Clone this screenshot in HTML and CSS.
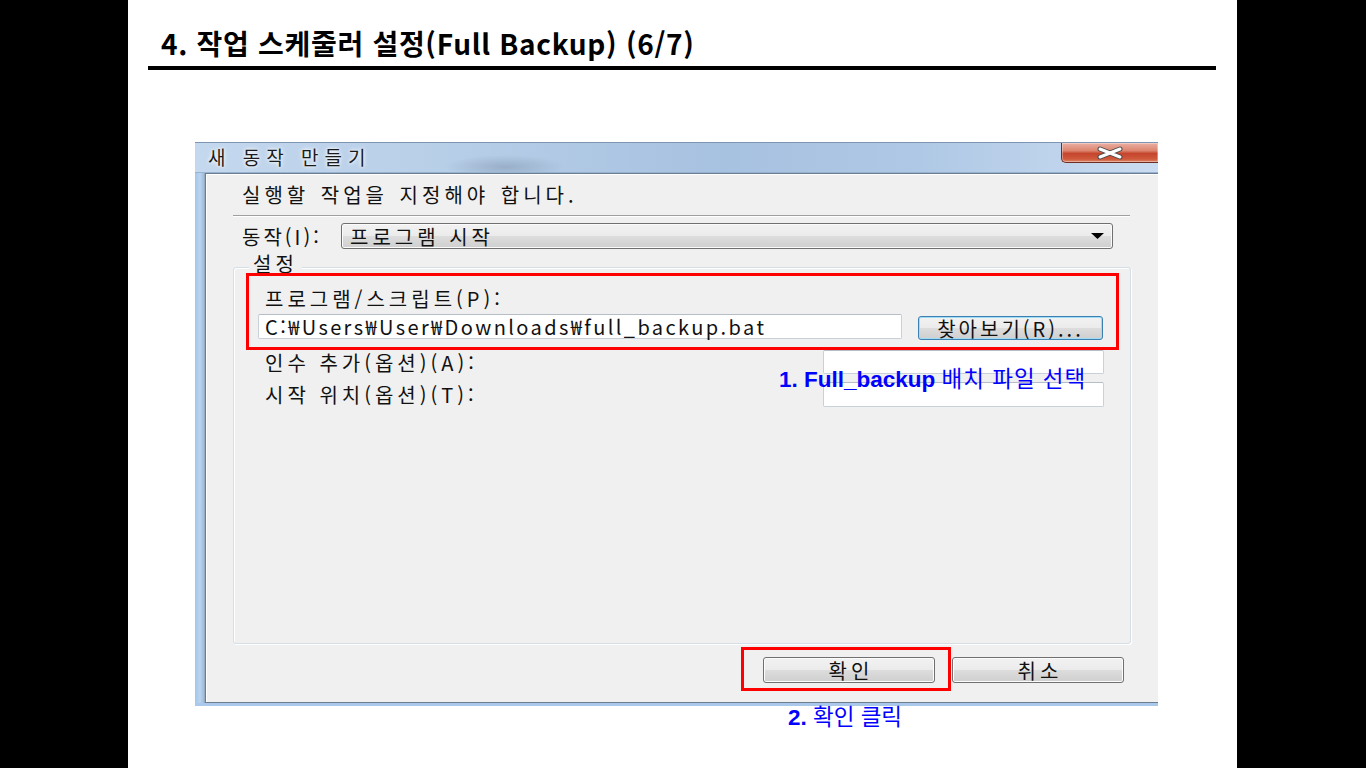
FILE: index.html
```html
<!DOCTYPE html>
<html lang="ko">
<head>
<meta charset="utf-8">
<title>4. 작업 스케줄러 설정(Full Backup) (6/7)</title>
<link rel="stylesheet" href="styles.css">
</head>
<body>
<div class="slide">
  <h1 class="slide-title">4. 작업 스케줄러 설정(Full Backup) (6/7)</h1>
  <div class="rule"></div>
  <div class="shot">
    <div class="dialog">
      <div class="titlebar">
        <span class="win-title">새 동작 만들기</span>
        <div class="close-btn">
          <svg width="28" height="14" viewBox="0 0 28 14">
            <path d="M4 3 L24 11 M24 3 L4 11" stroke="#4a4a4a" stroke-width="5" stroke-linecap="round" fill="none"/>
            <path d="M4 3 L24 11 M24 3 L4 11" stroke="#ffffff" stroke-width="3" stroke-linecap="round" fill="none"/>
          </svg>
        </div>
      </div>
      <div class="win-body">
        <div class="frame-left"></div>
        <div class="client">
          <div class="hdr">실행할 작업을 지정해야 합니다.</div>
          <div class="sep"></div>
          <div class="action-row">
            <span class="action-lbl">동작(I):</span>
            <div class="combo">
              <span>프로그램 시작</span>
              <svg class="combo-arrow" width="13" height="6" viewBox="0 0 13 6"><path d="M0 0 H13 L6.5 6 Z" fill="#000"/></svg>
            </div>
          </div>
          <div class="group">
            <span class="legend">설정</span>
            <div class="g-label">프로그램/스크립트(P):</div>
            <div class="prog-row">
              <div class="textbox tb-path">C:₩Users₩User₩Downloads₩full_backup.bat</div>
              <div class="btn btn-focus browse">찾아보기(R)...</div>
            </div>
            <div class="opt-row">
              <span class="g-lbl">인수 추가(옵션)(A):</span>
              <div class="textbox tb-opt"></div>
            </div>
            <div class="opt-row opt-row2">
              <span class="g-lbl">시작 위치(옵션)(T):</span>
              <div class="textbox tb-opt"></div>
            </div>
          </div>
          <div class="btn-row">
            <div class="btn ok">확인</div>
            <div class="btn cancel">취소</div>
          </div>
        </div>
      </div>
    </div>
    <div class="mark mark-prog"></div>
    <div class="mark mark-ok"></div>
    <div class="note note1"><b>1. Full_backup</b> <span class="note-ko">배치 파일 선택</span></div>
    <div class="note note2"><b>2.</b> 확인 클릭</div>
  </div>
</div>
</body>
</html>
```

FILE: styles.css
```css
html, body {
  margin: 0;
  height: 100%;
}
body {
  background: #000;
  overflow: hidden;
}
.slide {
  width: 1109px;
  height: 768px;
  margin-left: 128px;
  background: #fff;
  display: flex;
  flex-direction: column;
  font-family: "Noto Sans CJK KR", "Noto Sans", sans-serif;
}
.slide-title {
  margin: 25px 0 0 33px;
  font-size: 28px;
  font-weight: 700;
  letter-spacing: 0.7px;
  line-height: 36px;
  color: #000;
  white-space: nowrap;
}
.rule {
  margin: 5px 0 0 20px;
  width: 1068px;
  height: 4px;
  background: #000;
}
.shot {
  position: relative;
  margin: 72px 0 0 67px;
  width: 963px;
  height: 564px;
}
.dialog {
  width: 963px;
  height: 564px;
  display: flex;
  flex-direction: column;
  overflow: hidden;
  background: #f0f0f0;
  font-size: 20px;
  letter-spacing: 4px;
  color: #111;
}
.titlebar {
  height: 31px;
  box-sizing: border-box;
  display: flex;
  align-items: flex-start;
  border-top: 1px solid #7d95b0;
  border-bottom: 1px solid #98b3d2;
  background:
    radial-gradient(ellipse 60px 12px at 310px 24px, rgba(120,140,165,0.45), rgba(120,140,165,0) 100%),
    linear-gradient(90deg, #c4d8ee 0%, #b8cfe8 25%, #a7c1e0 55%, #afc8e5 75%, #cadcf1 100%);
}
.win-title {
  margin-left: 13px;
  line-height: 28px;
  font-size: 19px;
  letter-spacing: 6px;
  color: #1b1b1b;
  text-shadow: 0 0 5px #fff, 0 0 3px #fff;
  white-space: nowrap;
}
.close-btn {
  margin-left: auto;
  width: 97px;
  height: 20px;
  box-sizing: border-box;
  border: 1px solid #6e2c22;
  border-top: none;
  border-right: none;
  border-bottom-left-radius: 5px;
  background: linear-gradient(#eab0a2 0%, #dc8670 40%, #c6452d 55%, #cf5a3c 85%, #df8a6c 100%);
  display: flex;
  align-items: center;
  justify-content: center;
  box-shadow: inset 0 0 0 1px rgba(255,255,255,0.35);
}
.win-body {
  flex: 1;
  display: flex;
  border-bottom: 3px solid #a9c8ea;
}
.frame-left {
  width: 10px;
  background: linear-gradient(90deg, #a6c6e8 0%, #b8d4f1 50%, #a5bfdb 85%, #8ea3b9 100%);
}
.client {
  flex: 1;
  display: flex;
  flex-direction: column;
  border-top: 1px solid #6d7d90;
  border-left: 1px solid #6d7d90;
  border-bottom: 1px solid #6d7d90;
  box-shadow: inset 1px 1px 0 #fff;
}
.hdr {
  margin-left: 36px;
  height: 41px;
  line-height: 41px;
  white-space: nowrap;
  word-spacing: 2px;
}
.sep {
  margin-left: 27px;
  width: 897px;
  border-top: 1px solid #a0a0a0;
  border-bottom: 1px solid #fff;
}
.action-row {
  margin-top: 6px;
  height: 26px;
  display: flex;
  align-items: center;
}
.action-lbl {
  margin-left: 36px;
  width: 99px;
  white-space: nowrap;
  letter-spacing: 3px;
}
.combo {
  width: 772px;
  height: 26px;
  box-sizing: border-box;
  border: 1px solid #707070;
  border-radius: 3px;
  background: linear-gradient(#f2f2f2 0%, #ebebeb 50%, #dddddd 50%, #cfcfcf 100%);
  box-shadow: inset 0 0 0 1px #fbfbfb;
  display: flex;
  align-items: center;
  padding: 0 8px;
  white-space: nowrap;
}
.combo-arrow {
  margin-left: auto;
}
.group {
  margin: 18px 0 0 27px;
  width: 898px;
  height: 377px;
  box-sizing: border-box;
  border: 1px solid #d5dfe5;
  border-radius: 3px;
  box-shadow: inset 1px 1px 0 #fff, 1px 1px 0 #fff;
  display: flex;
  flex-direction: column;
}
.legend {
  align-self: flex-start;
  margin: -14px 0 0 15px;
  padding: 0 4px;
  line-height: 20px;
  background: #f0f0f0;
}
.g-label {
  margin: 10px 0 0 31px;
  line-height: 30px;
  white-space: nowrap;
}
.prog-row {
  display: flex;
  align-items: flex-start;
  height: 25px;
}
.textbox {
  box-sizing: border-box;
  background: #fff;
  border: 1px solid #c9d0d8;
  border-top-color: #b5bdc6;
  border-radius: 2px;
}
.tb-path {
  margin-left: 24px;
  width: 644px;
  height: 25px;
  padding-left: 6px;
  display: flex;
  align-items: center;
  letter-spacing: 2.4px;
  white-space: nowrap;
}
.btn {
  box-sizing: border-box;
  border: 1px solid #707070;
  border-radius: 3px;
  background: linear-gradient(#f2f2f2 0%, #ebebeb 50%, #dddddd 50%, #cfcfcf 100%);
  box-shadow: inset 0 0 0 1px #fcfcfc;
  display: flex;
  align-items: center;
  justify-content: center;
  white-space: nowrap;
}
.btn-focus {
  border-color: #3c7fb1;
  box-shadow: inset 0 0 0 1px #9fdcf5;
}
.browse {
  margin: 2px 0 0 16px;
  width: 185px;
  height: 24px;
  letter-spacing: 3px;
}
.opt-row {
  display: flex;
  align-items: center;
  margin-top: 11px;
  height: 24px;
}
.opt-row2 {
  margin-top: 8px;
  height: 25px;
}
.g-lbl {
  margin-left: 31px;
  width: 558px;
  white-space: nowrap;
}
.tb-opt {
  width: 281px;
  height: 100%;
}
.btn-row {
  margin-top: 13px;
  height: 26px;
  display: flex;
}
.ok {
  margin-left: 557px;
  width: 172px;
  padding-left: 4px;
}
.cancel {
  margin-left: 17px;
  width: 172px;
  padding-left: 4px;
}
.mark {
  position: absolute;
  box-sizing: border-box;
  border: 3px solid #ff0000;
}
.mark-prog {
  left: 51px;
  top: 131px;
  width: 873px;
  height: 77px;
}
.mark-ok {
  left: 546px;
  top: 505px;
  width: 210px;
  height: 44px;
}
.note {
  position: absolute;
  font-family: "Liberation Sans", "Noto Sans CJK KR", sans-serif;
  font-size: 22.5px;
  line-height: 26px;
  color: #0000ff;
  white-space: nowrap;
}
.note b {
  font-weight: 700;
}
.note-ko {
  letter-spacing: 1px;
}
.note1 {
  left: 584px;
  top: 225px;
}
.note2 {
  left: 593px;
  top: 563px;
}
```
